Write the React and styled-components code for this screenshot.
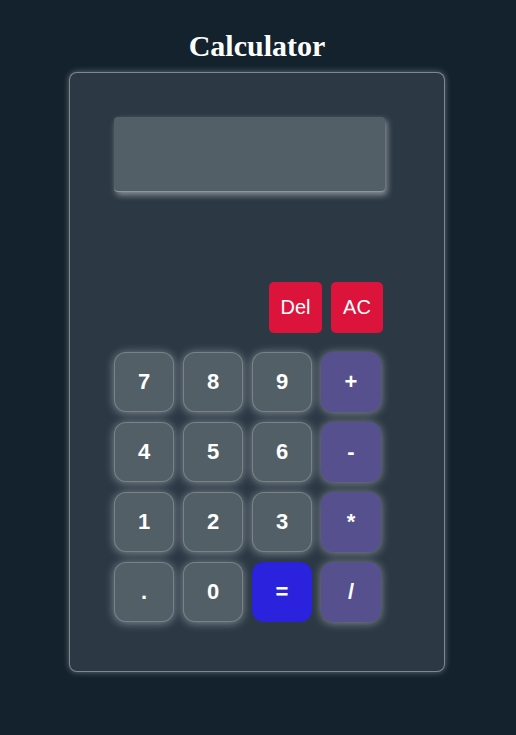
import styled, { createGlobalStyle } from "styled-components";

const GlobalStyle = createGlobalStyle`
  html, body {
    margin: 0;
    padding: 0;
    background-color: #13222d;
    min-height: 100%;
  }
  body {
    font-family: "Liberation Sans", Arial, sans-serif;
  }
`;

const keys = [
  ["7", "num"], ["8", "num"], ["9", "num"], ["+", "op"],
  ["4", "num"], ["5", "num"], ["6", "num"], ["-", "op"],
  ["1", "num"], ["2", "num"], ["3", "num"], ["*", "op"],
  [".", "num"], ["0", "num"], ["=", "eq"], ["/", "op"],
];

export default function App() {
  return (
    <Page>
      <GlobalStyle />
      <Title>Calculator</Title>
      <Card>
        <Display />
        <ClearRow>
          <ClearButton $w={53}>Del</ClearButton>
          <ClearButton $w={52}>AC</ClearButton>
        </ClearRow>
        <Keys>
          {keys.map(([label, kind]) => (
            <Key key={label} $kind={kind}>
              {label}
            </Key>
          ))}
        </Keys>
      </Card>
    </Page>
  );
}

const Page = styled.div`
  display: flex;
  flex-direction: column;
  align-items: center;
  min-height: 735px;
  padding: 29px 2px 0 0;
  box-sizing: border-box;
  background-color: #13222d;
`;

const Title = styled.h1`
  margin: 0 0 9px 0;
  font-family: "Liberation Serif", "Times New Roman", serif;
  font-size: 30px;
  font-weight: bold;
  color: #ffffff;
  line-height: normal;
`;

const Card = styled.div`
  box-sizing: border-box;
  width: 376px;
  height: 600px;
  padding: 44px 60px 0 44px;
  background-color: #2c3945;
  border: 1px solid rgba(255, 255, 255, 0.4);
  border-radius: 8px;
  box-shadow: 0 0 6px rgba(255, 255, 255, 0.35);
  display: flex;
  flex-direction: column;
`;

const Display = styled.div`
  width: 271px;
  height: 75px;
  background-color: #525f67;
  border-radius: 4px;
  box-shadow: 2px 3px 6px rgba(255, 255, 255, 0.45);
  border-bottom: 1px solid rgba(255, 255, 255, 0.35);
  box-sizing: border-box;
`;

const ClearRow = styled.div`
  display: flex;
  justify-content: flex-end;
  gap: 9px;
  width: 269px;
  margin-top: 90px;
`;

const ClearButton = styled.button`
  width: ${(p) => p.$w}px;
  height: 51px;
  padding: 0;
  border: none;
  border-radius: 5px;
  background-color: #dc143c;
  color: #ffffff;
  font-family: "Liberation Sans", Arial, sans-serif;
  font-size: 20px;
`;

const Keys = styled.div`
  display: grid;
  grid-template-columns: repeat(4, 60px);
  grid-auto-rows: 60px;
  column-gap: 9px;
  row-gap: 10px;
  margin-top: 19px;
`;

const keyColors = {
  num: "#525f67",
  op: "#56508f",
  eq: "#2a22dd",
};

const Key = styled.button`
  padding: 0;
  border-radius: 12px;
  border: 1px solid
    ${(p) => (p.$kind === "num" ? "rgba(255, 255, 255, 0.22)" : "transparent")};
  background-color: ${(p) => keyColors[p.$kind]};
  color: #ffffff;
  font-family: "Liberation Sans", Arial, sans-serif;
  font-size: 22px;
  font-weight: bold;
  box-shadow: ${(p) =>
    p.$kind === "eq" ? "none" : "0 1px 10px rgba(255, 255, 255, 0.42)"};
`;
